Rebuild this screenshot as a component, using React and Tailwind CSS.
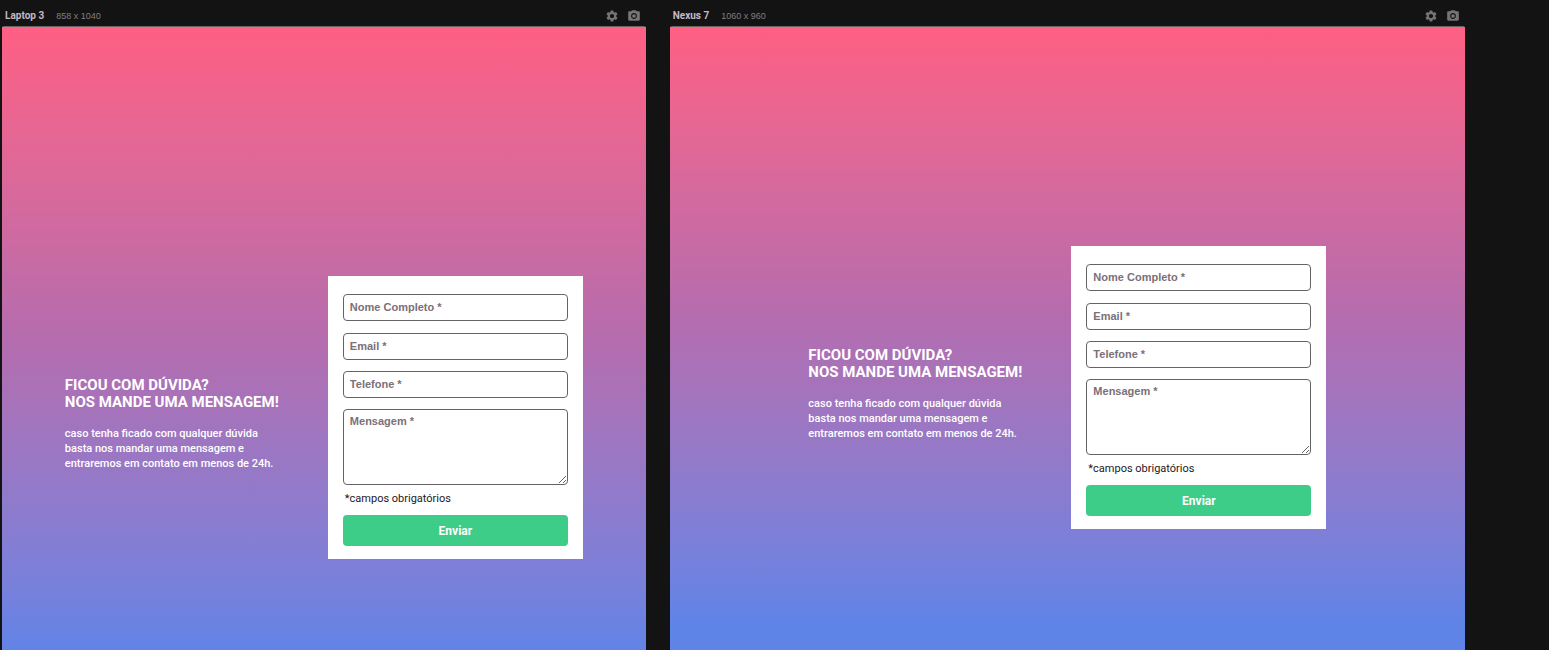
import React from "react";
import { MdSettings, MdCameraAlt } from "react-icons/md";

const inputClass =
  "block h-[27px] w-full rounded-[4px] border border-[#666267] bg-white px-1.5 pb-px font-['Liberation_Sans',sans-serif] text-[11px] font-bold text-[#222222] outline-none placeholder:text-[#7b7078]";

function ContactForm({ id }) {
  return (
    <form
      className="w-[255px] shrink-0 bg-white px-[15px] pt-[18px] pb-[13px]"
      onSubmit={(e) => e.preventDefault()}
    >
      <input className={inputClass + " mb-3"} type="text" aria-label="Nome Completo" id={id + "-nome"} placeholder="Nome Completo *" />
      <input className={inputClass + " mb-[11px]"} type="email" aria-label="Email" id={id + "-email"} placeholder="Email *" />
      <input className={inputClass + " mb-[11px]"} type="tel" aria-label="Telefone" id={id + "-telefone"} placeholder="Telefone *" />
      <textarea
        className="block h-[76px] w-full resize rounded-[4px] border border-[#666267] bg-white px-1.5 py-1 font-['Liberation_Sans',sans-serif] text-[11px] leading-[15px] font-bold text-[#222222] outline-none placeholder:text-[#7b7078]"
        aria-label="Mensagem"
        id={id + "-mensagem"}
        placeholder="Mensagem *"
      />
      <p className="mt-1.5 ml-0.5 text-[11px] leading-4 text-[#1d181d]">*campos obrigatórios</p>
      <button type="submit" className="mt-2 block h-[31px] w-full rounded-[4px] bg-[#3dcd88] pt-px text-[12px] font-bold text-white">
        Enviar
      </button>
    </form>
  );
}

function Device({ id, name, size, screenClass }) {
  return (
    <section className="min-w-0">
      <header className="flex h-[26px] items-center pt-[6px] pr-[5px] pl-[3px] text-[10px]">
        <div className="flex items-baseline gap-3">
          <h2 className="font-bold text-[#c5b9c4]">{name}</h2>
          <span className="font-['Liberation_Sans',sans-serif] text-[9px] text-[#827d82]">{size}</span>
        </div>
        <div className="ml-auto flex gap-2 text-[#777377]">
          <button type="button" aria-label="Configurações">
            <MdSettings className="size-[14px]" />
          </button>
          <button type="button" aria-label="Capturar tela">
            <MdCameraAlt className="size-[14px]" />
          </button>
        </div>
      </header>
      <div className="rounded-t-[2px] border-t border-[#6a6468]">
        <div
          className={
            "flex items-center justify-center gap-[46px] bg-linear-to-b from-[#ff5f83] via-[#b56cae] to-[#5f84e8] " + screenClass
          }
        >
          <div className="w-[217px] pt-3.5 text-white">
            <h1 className="text-[15px] leading-[17px] font-bold whitespace-nowrap">
              FICOU COM DÚVIDA?
              <br />
              NOS MANDE UMA MENSAGEM!
            </h1>
            <p className="mt-[15px] text-[11px] leading-[15px] font-medium whitespace-nowrap">
              caso tenha ficado com qualquer dúvida
              <br />
              basta nos mandar uma mensagem e
              <br />
              entraremos em contato em menos de 24h.
            </p>
          </div>
          <ContactForm id={id} />
        </div>
      </div>
    </section>
  );
}

export default function App() {
  return (
    <main className="grid h-screen grid-cols-[858fr_1060fr] items-start gap-6 overflow-hidden bg-[#131313] pr-[84px] pl-0.5 font-[Roboto,sans-serif]">
      <Device id="laptop" name="Laptop 3" size="858 x 1040" screenClass="h-[780px] via-40% to-81%" />
      <Device id="nexus" name="Nexus 7" size="1060 x 960" screenClass="h-[720px] via-40% to-83%" />
    </main>
  );
}
